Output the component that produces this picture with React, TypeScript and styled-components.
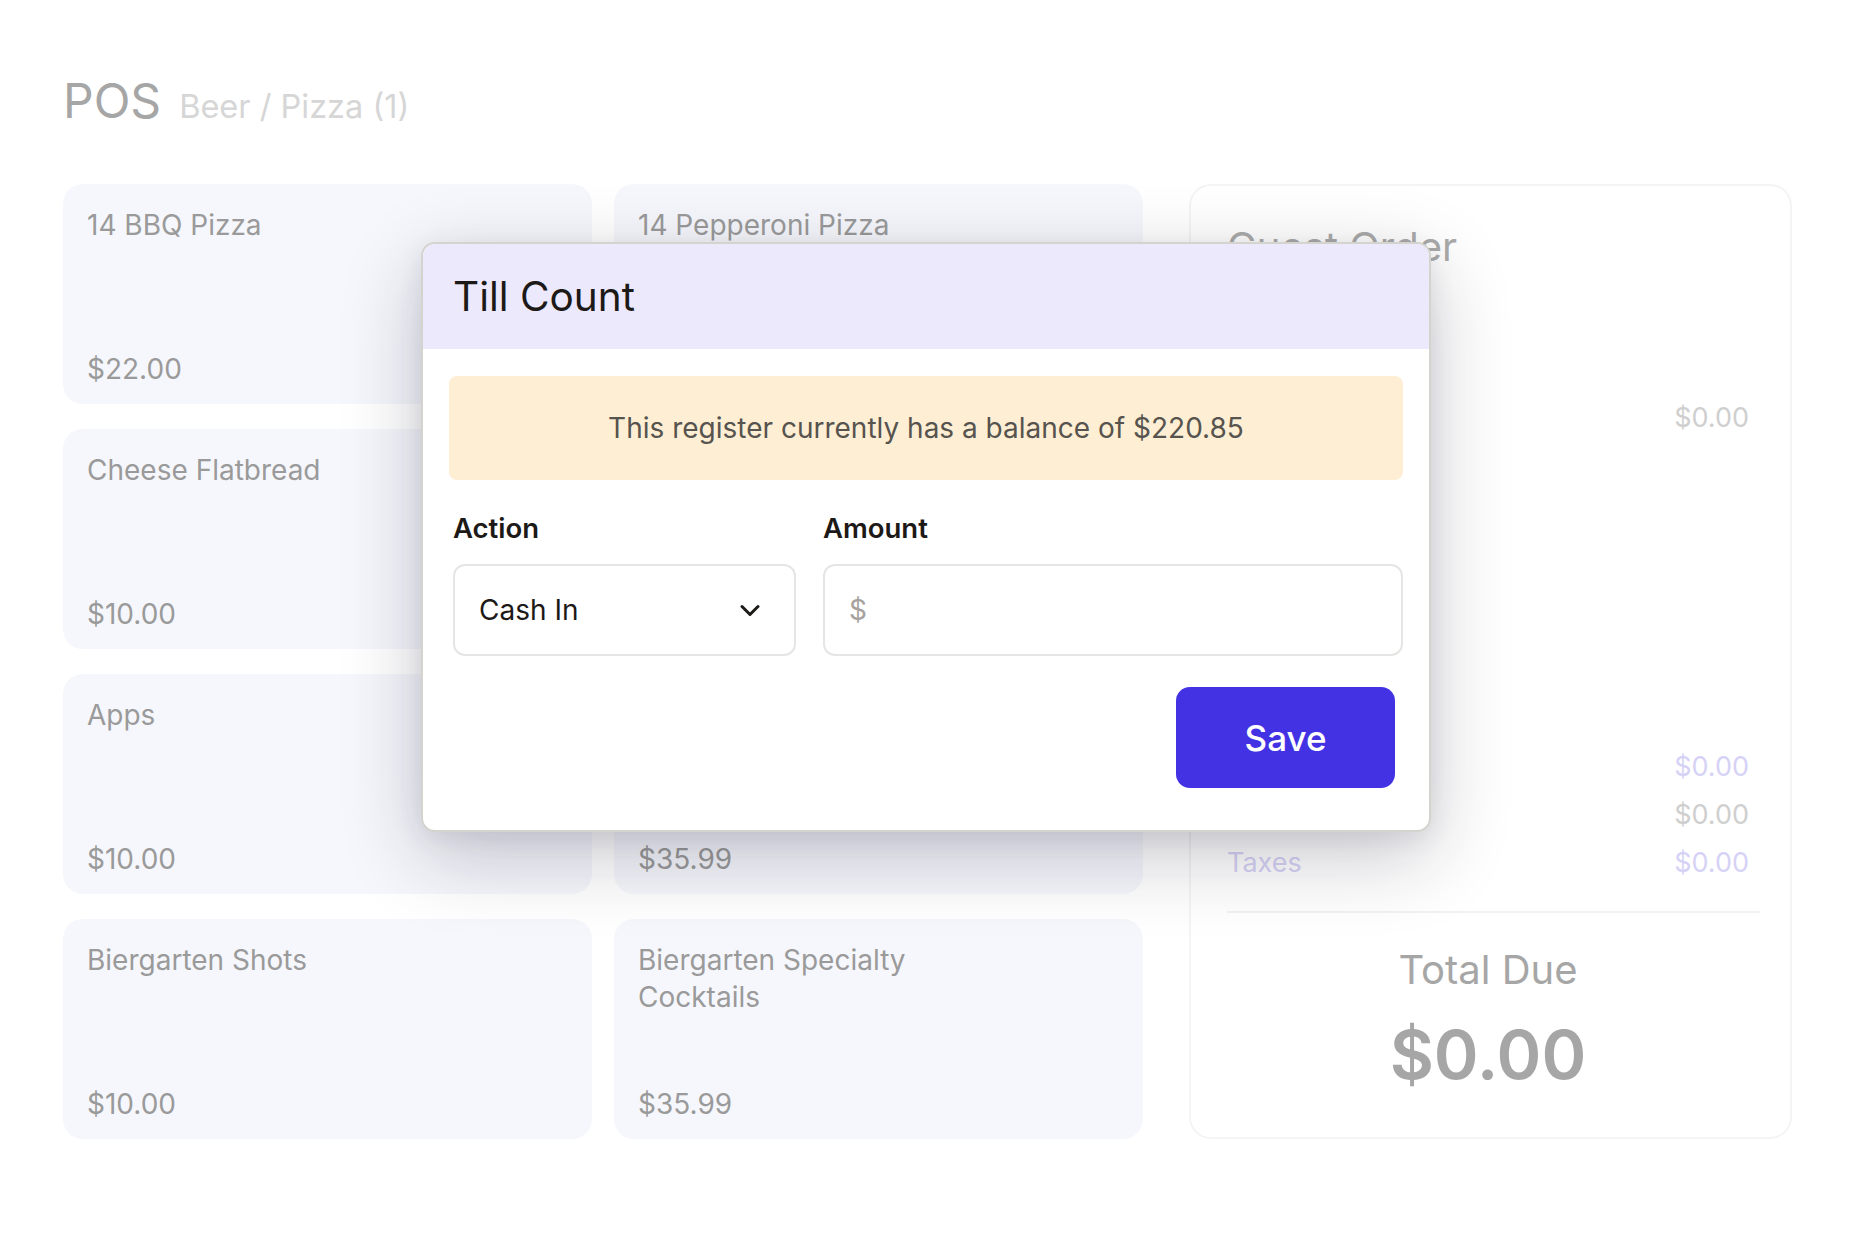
import styled, { createGlobalStyle } from "styled-components";

const GlobalStyle = createGlobalStyle`
  * {
    box-sizing: border-box;
  }

  body {
    margin: 0;
    background: #ffffff;
    font-family: Inter, "Noto Sans", "Liberation Sans", sans-serif;
  }
`;

const Page = styled.div`
  position: relative;
  width: 1853px;
  min-height: 1260px;
  padding: 72px 53px 0 63px;
`;

const Header = styled.header`
  display: flex;
  align-items: baseline;
  gap: 18px;
  margin-bottom: 54px;
`;

const Title = styled.h1`
  margin: 0;
  font-size: 48px;
  line-height: 58px;
  font-weight: 400;
  color: #a6a6a6;
`;

const Breadcrumb = styled.span`
  font-size: 32.5px;
  color: #d6d6d6;
`;

const Main = styled.main`
  display: flex;
  gap: 46px;
  align-items: stretch;
`;

const ItemGrid = styled.ul`
  list-style: none;
  margin: 0;
  padding: 0;
  display: grid;
  grid-template-columns: 529px 529px;
  grid-auto-rows: 220px;
  gap: 25px 22px;
`;

const ItemCard = styled.li`
  display: flex;
  flex-direction: column;
  justify-content: space-between;
  padding: 23px 24px 16px;
  border-radius: 20px;
  background: #f6f7fc;
  color: #9a9a9a;
  font-size: 28px;
  line-height: 37px;
`;

const ItemName = styled.span`
  max-width: 300px;
`;

const ItemPrice = styled.span``;

const OrderPanel = styled.aside`
  width: 603px;
  display: flex;
  flex-direction: column;
  padding: 37px 41px 43px 36px;
  border: 2px solid #f4f4f4;
  border-radius: 22px;
  background: #ffffff;
`;

const OrderTitle = styled.h2`
  margin: 0;
  font-size: 40px;
  line-height: 48px;
  font-weight: 400;
  color: #ababab;
`;

const SummaryRow = styled.div<{ $tone: "grey" | "lavender" }>`
  display: flex;
  justify-content: space-between;
  font-size: 27px;
  line-height: 48px;
  color: ${(p) => (p.$tone === "lavender" ? "#d6d2f6" : "#cfcfcf")};
`;

const FirstRow = styled(SummaryRow)`
  margin-top: 123px;
`;

const Summary = styled.div`
  margin-top: auto;
`;

const Divider = styled.hr`
  margin: 24px -11px 0 0;
  border: none;
  border-top: 2px solid #f2f2f2;
`;

const TotalBlock = styled.div`
  display: flex;
  flex-direction: column;
  align-items: center;
  margin-top: 33px;
  gap: 20px;
  color: #a6a6a6;
`;

const TotalLabel = styled.span`
  font-size: 40px;
  line-height: 48px;
`;

const TotalValue = styled.span`
  font-size: 68px;
  line-height: 80px;
  font-weight: 600;
`;

const Modal = styled.div`
  position: absolute;
  left: 421px;
  top: 242px;
  width: 1010px;
  border: 2px solid #d5d3ce;
  border-radius: 14px;
  background: #ffffff;
  overflow: hidden;
  box-shadow: 0 24px 80px rgba(25, 25, 45, 0.24), 0 6px 24px rgba(25, 25, 45, 0.08);
`;

const ModalHeader = styled.div`
  height: 105px;
  display: flex;
  align-items: center;
  padding: 0 30px;
  background: #ece9fc;
`;

const ModalTitle = styled.h3`
  margin: 0;
  font-size: 40.5px;
  font-weight: 400;
  color: #1c1917;
`;

const ModalBody = styled.div`
  padding: 27px 26px 42px 26px;
`;

const Notice = styled.div`
  height: 104px;
  display: flex;
  align-items: center;
  justify-content: center;
  border-radius: 8px;
  background: #feefd4;
  font-size: 28px;
  color: #57534e;
`;

const Fields = styled.div`
  display: grid;
  grid-template-columns: 343px 1fr;
  gap: 0 27px;
  margin-top: 30px;
  padding-left: 4px;
`;

const Field = styled.label`
  display: flex;
  flex-direction: column;
  gap: 18px;
`;

const FieldLabel = styled.span`
  font-size: 27.5px;
  line-height: 36px;
  font-weight: 600;
  color: #1c1917;
`;

const FieldBox = styled.div<{ $muted?: boolean }>`
  height: 92px;
  display: flex;
  align-items: center;
  justify-content: space-between;
  padding: 0 34px 0 24px;
  border: 2px solid #e7e5e4;
  border-radius: 12px;
  font-size: 28px;
  color: ${(p) => (p.$muted ? "#a8a29e" : "#1c1917")};
`;

const Actions = styled.div`
  display: flex;
  justify-content: flex-end;
  margin-top: 31px;
  padding-right: 8px;
`;

const SaveButton = styled.button`
  width: 219px;
  height: 101px;
  border: none;
  border-radius: 14px;
  background: #4332e4;
  color: #ffffff;
  font-family: inherit;
  font-size: 35px;
  font-weight: 500;
`;

const items = [
  { name: "14 BBQ Pizza", price: "$22.00" },
  { name: "14 Pepperoni Pizza", price: "$35.99" },
  { name: "Cheese Flatbread", price: "$10.00" },
  { name: "Margherita Flatbread", price: "$35.99" },
  { name: "Apps", price: "$10.00" },
  { name: "Biergarten Beer", price: "$35.99" },
  { name: "Biergarten Shots", price: "$10.00" },
  { name: "Biergarten Specialty Cocktails", price: "$35.99" },
];

function Chevron() {
  return (
    <svg width="20" height="13" viewBox="0 0 20 13" fill="none">
      <path
        d="M2 2.5 L10 10.5 L18 2.5"
        stroke="#1c1917"
        strokeWidth="3"
        strokeLinecap="round"
        strokeLinejoin="round"
      />
    </svg>
  );
}

function App() {
  return (
    <>
      <GlobalStyle />
      <Page>
        <Header>
          <Title>POS</Title>
          <Breadcrumb>Beer / Pizza (1)</Breadcrumb>
        </Header>

        <Main>
          <ItemGrid>
            {items.map(function (item) {
              return (
                <ItemCard key={item.name}>
                  <ItemName>{item.name}</ItemName>
                  <ItemPrice>{item.price}</ItemPrice>
                </ItemCard>
              );
            })}
          </ItemGrid>

          <OrderPanel>
            <OrderTitle>Guest Order</OrderTitle>
            <FirstRow $tone="grey">
              <span />
              <span>$0.00</span>
            </FirstRow>

            <Summary>
              <SummaryRow $tone="lavender">
                <span />
                <span>$0.00</span>
              </SummaryRow>
              <SummaryRow $tone="grey">
                <span />
                <span>$0.00</span>
              </SummaryRow>
              <SummaryRow $tone="lavender">
                <span>Taxes</span>
                <span>$0.00</span>
              </SummaryRow>
              <Divider />
              <TotalBlock>
                <TotalLabel>Total Due</TotalLabel>
                <TotalValue>$0.00</TotalValue>
              </TotalBlock>
            </Summary>
          </OrderPanel>
        </Main>

        <Modal>
          <ModalHeader>
            <ModalTitle>Till Count</ModalTitle>
          </ModalHeader>
          <ModalBody>
            <Notice>This register currently has a balance of $220.85</Notice>
            <Fields>
              <Field>
                <FieldLabel>Action</FieldLabel>
                <FieldBox>
                  Cash In
                  <Chevron />
                </FieldBox>
              </Field>
              <Field>
                <FieldLabel>Amount</FieldLabel>
                <FieldBox $muted>$</FieldBox>
              </Field>
            </Fields>
            <Actions>
              <SaveButton>Save</SaveButton>
            </Actions>
          </ModalBody>
        </Modal>
      </Page>
    </>
  );
}

export default App;
